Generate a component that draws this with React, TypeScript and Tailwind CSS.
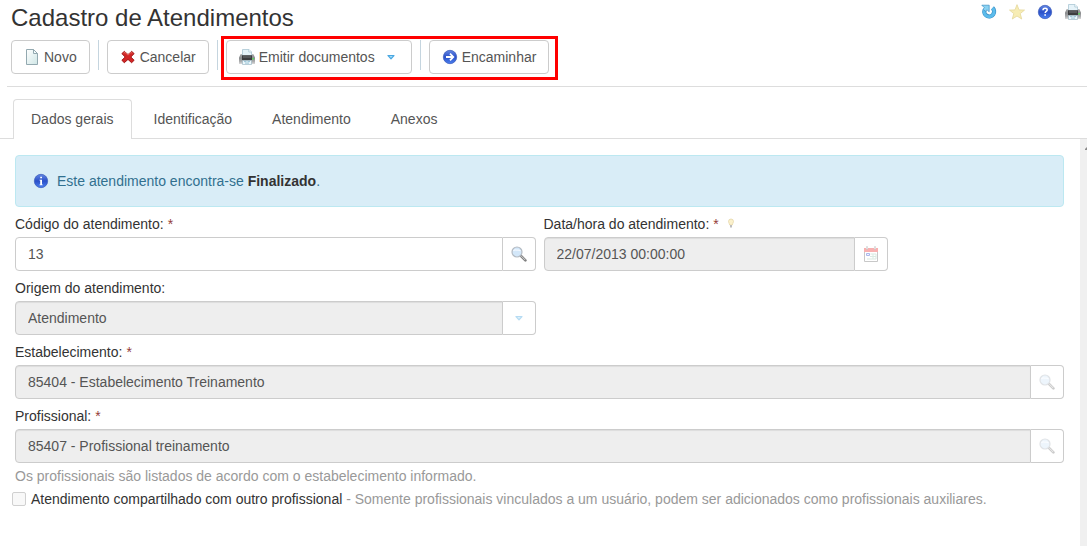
import type { ReactNode } from "react";

const TABS = ["Dados gerais", "Identificação", "Atendimento", "Anexos"];

function PageIcon() {
  return (
    <svg width="16" height="16" viewBox="0 0 16 16" fill="none" aria-hidden="true">
      <defs>
        <linearGradient id="page" x1="0" y1="0" x2="1" y2="1">
          <stop offset="0" stopColor="#fff" />
          <stop offset="1" stopColor="#cfe6e6" />
        </linearGradient>
      </defs>
      <path d="M2.5.5h7l4 4v11h-11z" fill="url(#page)" stroke="#93a9b0" />
      <path d="M9.5.5v4h4z" fill="#f4fbfc" stroke="#93a9b0" strokeLinejoin="round" />
    </svg>
  );
}

function CrossIcon() {
  return (
    <svg width="16" height="16" viewBox="0 0 16 16" aria-hidden="true">
      <path
        d="M4.3 2.4 8 5.6l3.7-3.2 2.4 2.2L10.8 8l3.3 3.3-2.5 2.4L8 10.4l-3.7 3.3-2.4-2.4L5.2 8 1.9 4.6z"
        fill="#d32626"
        stroke="#a01313"
        strokeLinejoin="round"
      />
      <path d="M3.6 4.2 5 3.4l3 2.7 3-2.7 1.4.8" fill="none" stroke="#e66a62" />
    </svg>
  );
}

function PrinterIcon() {
  return (
    <svg width="16" height="16" viewBox="0 0 16 16" aria-hidden="true">
      <defs>
        <linearGradient id="printer" x1="0" y1="0" x2="0" y2="1">
          <stop offset="0" stopColor="#a4a5a6" />
          <stop offset=".5" stopColor="#8b8d8f" />
          <stop offset="1" stopColor="#b9babb" />
        </linearGradient>
      </defs>
      <path d="M3.5 8V.5H10L12.5 3v5z" fill="#e6f3f9" stroke="#a9c6d3" strokeWidth=".8" />
      <path d="M9.8.5V3h2.6" fill="#fff" stroke="#a9c6d3" strokeWidth=".8" />
      <path d="M1.500 5.200H3V7h10V5.200h1.500L16 8.500v5H0v-5z" fill="url(#printer)" />
      <path d="M3 6.200h10v5H3z" fill="#3d3e40" />
      <path d="M4 7.300h8v1.400H4z" fill="#626466" />
      <path d="M0 13.500h16v1H0z" fill="#a2a3a4" />
      <path d="M13.300 9H15v1.600h-1.700z" fill="#54d956" />
      <path d="M3.500 11.500h9v4h-9z" fill="#edf7fb" stroke="#a0bac5" strokeWidth=".7" />
      <path d="M5 12.600h2.500m1 0H11m-5 1.500h4" stroke="#91bed3" strokeWidth=".9" />
    </svg>
  );
}

function RoundIcon({ id, children }: { id: string; children: ReactNode }) {
  return (
    <svg width="16" height="16" viewBox="0 0 16 16" fill="none" aria-hidden="true">
      <defs>
        <linearGradient id={id} x1="0" y1="0" x2="0" y2="1">
          <stop offset="0" stopColor="#6488e4" />
          <stop offset=".5" stopColor="#2b50c8" />
          <stop offset="1" stopColor="#4b80f0" />
        </linearGradient>
      </defs>
      <circle cx="8" cy="8" r="6.7" fill={`url(#${id})`} stroke="#3a59b8" strokeWidth=".7" />
      {children}
    </svg>
  );
}

function ForwardIcon() {
  return (
    <RoundIcon id="forward">
      <path d="M4 8h7M8 4.700 11.300 8 8 11.300" stroke="#fff" strokeWidth="1.8" />
    </RoundIcon>
  );
}

function InfoIcon() {
  return (
    <RoundIcon id="info">
      <path d="M7.200 3.700H9v1.600H7.200zM6.500 6.700H9v4.700h.7v.9H6.500v-.9h.7V7.600h-.7z" fill="#fff" />
    </RoundIcon>
  );
}

function HelpIcon() {
  return (
    <RoundIcon id="help">
      <path d="M6 6.300c0-1.300.8-2 2.100-2s2.100.7 2.100 1.700c0 1.400-2 1.500-2 3" stroke="#fff" strokeWidth="1.5" />
      <path d="M7.300 10.200H9v1.600H7.300z" fill="#fff" />
    </RoundIcon>
  );
}

function RefreshIcon() {
  return (
    <svg width="16" height="16" viewBox="0 0 16 16" fill="none" aria-hidden="true">
      <path d="M11.500 3.900a4.900 4.900 0 1 1-7.900 2" stroke="#3a8fc4" strokeWidth="4.200" />
      <path d="M11.500 4.200a4.900 4.900 0 1 1-7.900 1.700" stroke="#5cbcec" strokeWidth="3" />
      <path d="M.8 1.200h7.400v6.600L6 5.800 4.300 7.300 2 5.200 3.300 3.700z" fill="#8ad2f2" stroke="#3a8fc4" strokeWidth=".7" strokeLinejoin="round" />
    </svg>
  );
}

function StarIcon() {
  return (
    <svg width="16" height="16" viewBox="0 0 16 16" aria-hidden="true">
      <path
        d="m8 .7 2 5.200 5.500.2-4.300 3.500 1.500 5.400L8 12l-4.700 3 1.500-5.400L.5 6.100 6 5.900z"
        fill="#f7edb4"
        stroke="#e6daa0"
        strokeWidth=".9"
        strokeLinejoin="round"
      />
    </svg>
  );
}

function SearchIcon() {
  return (
    <svg width="16" height="16" viewBox="0 0 16 16" fill="none" aria-hidden="true">
      <path d="m10.200 10.200 4.200 4.200" stroke="#808080" strokeWidth="2.6" strokeLinecap="round" />
      <path d="m10.300 10.100 3.900 3.900" stroke="#d0d0d0" />
      <circle cx="6" cy="6" r="5" fill="#d3e7f9" stroke="#b4bbc3" strokeWidth="1.2" />
      <path d="M2.500 5c1-2 2.300-.8 3.500-.8s2-.4 3.500.6" stroke="#f3f9ff" strokeWidth="1.3" />
    </svg>
  );
}

function CalendarIcon() {
  return (
    <svg width="16" height="16" viewBox="0 0 16 16" fill="none" aria-hidden="true">
      <path d="M1.500 2.500h13v13h-13z" fill="#fff" stroke="#777" />
      <path d="M1 2h14v4H1z" fill="#f03c3c" />
      <path d="M4 .5v3m8-3v3" stroke="#777" strokeWidth="2" />
      <path d="M4 1v2m8-2v2" stroke="#fff" strokeWidth=".8" />
      <path d="M7.500 8H13v5H4M10 8v5M7 10.500h6" stroke="#a3cdb8" />
      <path d="M3.500 7.500h3v2h-3z" fill="#dfe6ff" stroke="#3050d0" />
    </svg>
  );
}

function BulbIcon() {
  return (
    <svg width="8" height="12" viewBox="0 0 8 12" aria-hidden="true">
      <path
        d="M4 1a2.500 2.500 0 0 1 2.500 2.500C6.500 5 5.300 5.500 5.300 7H2.700C2.700 5.500 1.500 5 1.500 3.500A2.500 2.500 0 0 1 4 1z"
        fill="#fbf1cc"
        stroke="#e3d3a4"
        strokeWidth=".7"
      />
      <path d="M3 7h2v2.500H3z" fill="#bdbdbd" />
    </svg>
  );
}

function ArrowIcon() {
  return (
    <svg width="8" height="6" viewBox="0 0 8 6" aria-hidden="true">
      <path d="M1 1.500h6L4 4.800z" fill="#a8dcf8" stroke="#4aa8e2" strokeWidth="1.2" strokeLinejoin="round" />
    </svg>
  );
}

function ToolButton({ icon, children }: { icon: ReactNode; children: ReactNode }) {
  return (
    <button type="button" className="flex h-[34px] items-center gap-1 rounded border border-[#ccc] bg-white px-3 text-[#555]">
      {icon}
      {children}
    </button>
  );
}

function Separator() {
  return <span className="mb-1 h-[30px] w-px bg-[#c5d5df]" />;
}

function Label({ htmlFor, required, children }: { htmlFor: string; required?: boolean; children: ReactNode }) {
  return (
    <label htmlFor={htmlFor} className="block">
      {children}
      {required && <span className="ml-1 text-[#953b39]">*</span>}
    </label>
  );
}

const CONTROL =
  "h-[34px] min-w-0 flex-1 rounded-l border border-[#ccc] px-3 text-[#555] opacity-100 disabled:bg-[#eee] disabled:shadow-[inset_0_1px_1px_rgba(0,0,0,0.075)]";

function AddonButton({ label, disabled, children }: { label: string; disabled?: boolean; children: ReactNode }) {
  return (
    <button
      type="button"
      aria-label={label}
      disabled={disabled}
      className="flex h-[34px] w-[33px] shrink-0 items-center justify-center rounded-r border border-l-0 border-[#ccc] bg-white disabled:*:opacity-40"
    >
      {children}
    </button>
  );
}

export default function App() {
  return (
    <div className="flex min-h-screen flex-col bg-white font-['Liberation_Sans',Arial,sans-serif] text-sm leading-5 text-[#333]">
      <header className="ml-[7px] border-b border-[#ddd] pb-3 pl-1">
        <div className="flex items-start justify-between pr-[6px]">
          <h1 className="pt-[3px] text-2xl leading-[30px]">Cadastro de Atendimentos</h1>
          <div className="flex gap-3 pt-1">
            <button type="button" aria-label="Atualizar"><RefreshIcon /></button>
            <button type="button" aria-label="Favorito"><StarIcon /></button>
            <button type="button" aria-label="Ajuda"><HelpIcon /></button>
            <button type="button" aria-label="Imprimir"><PrinterIcon /></button>
          </div>
        </div>

        <div className="mt-[7px] flex items-center gap-2">
          <ToolButton icon={<PageIcon />}>Novo</ToolButton>
          <Separator />
          <ToolButton icon={<CrossIcon />}>Cancelar</ToolButton>
          <Separator />
          <div className="relative flex items-center gap-2">
            <ToolButton icon={<PrinterIcon />}>
              Emitir documentos
              <span className="mr-1 ml-2"><ArrowIcon /></span>
            </ToolButton>
            <Separator />
            <ToolButton icon={<ForwardIcon />}>Encaminhar</ToolButton>
            <span className="pointer-events-none absolute -top-1 -right-[9px] -bottom-[6px] -left-[5px] border-3 border-[#f00]" />
          </div>
        </div>
      </header>

      <nav className="mt-3 flex gap-1 border-b border-[#ddd] pl-[13px] text-[#555]">
        {TABS.map((tab, i) => (
          <a
            key={tab}
            href="#"
            className={
              i === 0
                ? "-mb-px h-10 rounded-t border border-b-0 border-[#ddd] bg-white px-[17px] pt-[9px]"
                : "h-[39px] border border-b-0 border-transparent px-[17px] pt-[9px]"
            }
          >
            {tab}
          </a>
        ))}
      </nav>

      <div className="flex flex-1">
        <main className="min-w-0 flex-1 pt-4 pr-4 pl-[15px]">
          <div className="flex items-center gap-2 rounded border border-[#bce8f1] bg-[#d9edf7] px-[17px] py-[15px] text-[#31708f]">
            <InfoIcon />
            <p>
              Este atendimento encontra-se <strong className="text-[#333]">Finalizado</strong>.
            </p>
          </div>

          <form className="mt-[7px] flex flex-col gap-[7px]">
            <div className="grid grid-cols-2 gap-2">
              <div className="flex flex-col gap-[3px]">
                <Label htmlFor="codigo" required>Código do atendimento:</Label>
                <div className="flex">
                  <input id="codigo" defaultValue="13" className={CONTROL} />
                  <AddonButton label="Pesquisar atendimento"><SearchIcon /></AddonButton>
                </div>
              </div>
              <div className="flex flex-col gap-[3px]">
                <div className="flex items-center gap-2">
                  <Label htmlFor="data" required>Data/hora do atendimento:</Label>
                  <BulbIcon />
                </div>
                <div className="flex max-w-[344px]">
                  <input id="data" disabled defaultValue="22/07/2013 00:00:00" className={CONTROL} />
                  <AddonButton label="Abrir calendário" disabled><CalendarIcon /></AddonButton>
                </div>
              </div>
            </div>

            <div className="grid grid-cols-2 gap-2">
              <div className="flex flex-col gap-[3px]">
                <Label htmlFor="origem">Origem do atendimento:</Label>
                <div className="flex">
                  <select id="origem" disabled className={`appearance-none ${CONTROL}`}>
                    <option>Atendimento</option>
                  </select>
                  <AddonButton label="Abrir opções" disabled><ArrowIcon /></AddonButton>
                </div>
              </div>
            </div>

            <div className="flex flex-col gap-[3px]">
              <Label htmlFor="estabelecimento" required>Estabelecimento:</Label>
              <div className="flex">
                <input id="estabelecimento" disabled defaultValue="85404 - Estabelecimento Treinamento" className={CONTROL} />
                <AddonButton label="Pesquisar estabelecimento" disabled><SearchIcon /></AddonButton>
              </div>
            </div>

            <div className="flex flex-col gap-[3px]">
              <Label htmlFor="profissional" required>Profissional:</Label>
              <div className="flex">
                <input id="profissional" disabled defaultValue="85407 - Profissional treinamento" className={CONTROL} />
                <AddonButton label="Pesquisar profissional" disabled><SearchIcon /></AddonButton>
              </div>
              <p className="text-[#999]">Os profissionais são listados de acordo com o estabelecimento informado.</p>
            </div>

            <div className="-mt-1 -ml-[3px] flex items-center gap-[5px]">
              <input
                id="compartilhado"
                type="checkbox"
                disabled
                className="size-[14px] appearance-none rounded-xs border border-[#d0d0d0] bg-[#f8f8f8]"
              />
              <p className="text-[#999]">
                <label htmlFor="compartilhado" className="text-[#333]">Atendimento compartilhado com outro profissional</label>
                {" - Somente profissionais vinculados a um usuário, podem ser adicionados como profissionais auxiliares."}
              </p>
            </div>
          </form>
        </main>

        <div className="flex w-[7px] shrink-0 justify-end overflow-hidden bg-[#f0f0f0] pt-2">
          <svg width="2" height="3" viewBox="0 0 2 3" aria-hidden="true">
            <path d="M0 3V2l2-2v3z" fill="#8a8a8a" />
          </svg>
        </div>
      </div>
    </div>
  );
}
